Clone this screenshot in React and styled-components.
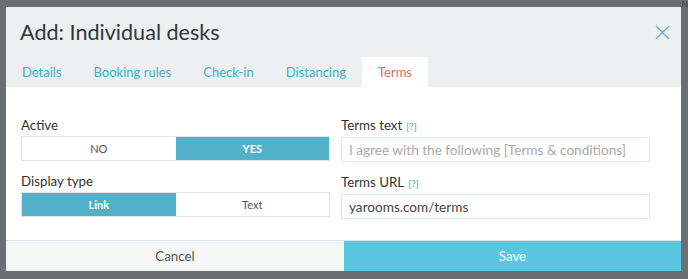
import React from "react";
import styled, { createGlobalStyle } from "styled-components";

const Global = createGlobalStyle`
  html, body { margin: 0; padding: 0; }
  body {
    background: #6c6f72;
    font-family: Lato, "Open Sans", Arial, sans-serif;
    height: 279px;
    overflow: hidden;
  }
  #root { position: relative; }
`;

const Backdrop = styled.div`
  position: relative;
  width: 688px;
  height: 279px;
  padding: 7px 0 0 6px;
  box-sizing: border-box;
`;

const BehindGlyph = styled.span`
  position: absolute;
  top: 0;
  right: 0;
  font-size: 9px;
  line-height: 9px;
  color: #3a3c3e;
  font-family: "Liberation Sans", Arial, sans-serif;
`;

const Modal = styled.div`
  width: 675px;
  height: 264px;
  background: #fff;
  display: flex;
  flex-direction: column;
`;

const Header = styled.div`
  background: #ecf0f1;
  display: flex;
  flex-direction: column;
`;

const TitleRow = styled.div`
  height: 50px;
  display: flex;
  align-items: center;
  justify-content: space-between;
  padding: 0 10px 0 14px;
`;

const Title = styled.h1`
  margin: 0;
  font-size: 21.6px;
  font-weight: 400;
  color: #333638;
`;

const CloseBtn = styled.button`
  border: 0;
  background: none;
  padding: 0;
  width: 18px;
  height: 18px;
  display: flex;
  align-items: center;
  justify-content: center;
  cursor: pointer;
`;

const Tabs = styled.div`
  display: flex;
  height: 30px;
`;

const Tab = styled.div`
  padding: 0 16px;
  display: flex;
  align-items: center;
  font-size: 13px;
  color: ${(p) => (p.$active ? "#e5685a" : "#40aecb")};
  background: ${(p) => (p.$active ? "#fff" : "transparent")};
`;

const Body = styled.div`
  flex: 1;
  padding: 29px 31px 0 15px;
  display: grid;
  grid-template-columns: 309px 309px;
  column-gap: 11px;
  align-content: start;
`;

const Column = styled.div`
  display: flex;
  flex-direction: column;
  gap: 11px;
`;

const Field = styled.div`
  display: flex;
  flex-direction: column;
`;

const Label = styled.label`
  font-size: 13.3px;
  line-height: 18px;
  color: #333;
  margin-bottom: 2px;
`;

const Help = styled.span`
  font-size: 10px;
  color: #40aecb;
  margin-left: 4px;
`;

const Toggle = styled.div`
  display: grid;
  grid-template-columns: 1fr 1fr;
  height: 25px;
  border: 1px solid #dde7ea;
  box-sizing: border-box;
`;

const ToggleOpt = styled.div`
  display: flex;
  align-items: center;
  justify-content: center;
  font-size: 11px;
  font-weight: ${(p) => (p.$on ? 700 : 400)};
  color: ${(p) => (p.$on ? "#fff" : "#555")};
  background: ${(p) => (p.$on ? "#52b1c8" : "#fff")};
`;

const Input = styled.div`
  height: 25px;
  box-sizing: border-box;
  border: 1px solid #dde7ea;
  display: flex;
  align-items: center;
  padding: 0 7px;
  font-size: 13.6px;
  color: ${(p) => (p.$placeholder ? "#a9a9a9" : "#444")};
  white-space: nowrap;
  overflow: hidden;
`;

const Footer = styled.div`
  display: grid;
  grid-template-columns: 338px 1fr;
  height: 30px;
  border-top: 1px solid #d9e6ea;
`;

const FooterBtn = styled.button`
  border: 0;
  margin: 0;
  font-family: inherit;
  font-size: 13.3px;
  display: flex;
  align-items: center;
  justify-content: center;
  color: ${(p) => (p.$primary ? "#fff" : "#555")};
  background: ${(p) => (p.$primary ? "#5bc6df" : "#f5f7f7")};
`;

export default function App() {
  const tabs = ["Details", "Booking rules", "Check-in", "Distancing", "Terms"];
  return (
    <>
      <Global />
      <Backdrop>
        <BehindGlyph>N</BehindGlyph>
        <Modal>
          <Header>
            <TitleRow>
              <Title>Add: Individual desks</Title>
              <CloseBtn aria-label="Close">
                <svg width="15" height="15" viewBox="0 0 15 15">
                  <path d="M1 1L14 14M14 1L1 14" stroke="#5ab4cb" strokeWidth="1.3" fill="none" />
                </svg>
              </CloseBtn>
            </TitleRow>
            <Tabs>
              {tabs.map((t) => (
                <Tab key={t} $active={t === "Terms"}>{t}</Tab>
              ))}
            </Tabs>
          </Header>
          <Body>
            <Column>
              <Field>
                <Label>Active</Label>
                <Toggle>
                  <ToggleOpt>NO</ToggleOpt>
                  <ToggleOpt $on>YES</ToggleOpt>
                </Toggle>
              </Field>
              <Field>
                <Label>Display type</Label>
                <Toggle>
                  <ToggleOpt $on>Link</ToggleOpt>
                  <ToggleOpt>Text</ToggleOpt>
                </Toggle>
              </Field>
            </Column>
            <Column>
              <Field>
                <Label>Terms text<Help>[?]</Help></Label>
                <Input $placeholder>I agree with the following [Terms &amp; conditions]</Input>
              </Field>
              <Field>
                <Label>Terms URL<Help>[?]</Help></Label>
                <Input>yarooms.com/terms</Input>
              </Field>
            </Column>
          </Body>
          <Footer>
            <FooterBtn>Cancel</FooterBtn>
            <FooterBtn $primary>Save</FooterBtn>
          </Footer>
        </Modal>
      </Backdrop>
    </>
  );
}
